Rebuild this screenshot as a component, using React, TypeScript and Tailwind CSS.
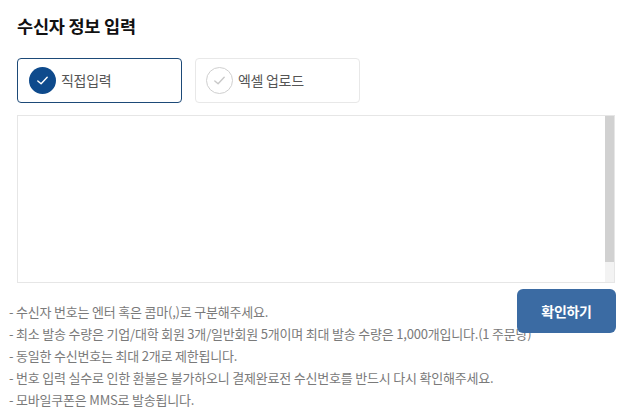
import React from "react";

function Check({ color, size = 14 }: { color: string; size?: number }) {
  return (
    <svg width={size} height={size} viewBox="0 0 16 16" fill="none">
      <path d="M3 8.5 L6.5 11.5 L13 4.5" stroke={color} strokeWidth="1.5" strokeLinecap="round" strokeLinejoin="round" />
    </svg>
  );
}

export default function App() {
  const notes = [
    "- 수신자 번호는 엔터 혹은 콤마(,)로 구분해주세요.",
    "- 최소 발송 수량은 기업/대학 회원 3개/일반회원 5개이며 최대 발송 수량은 1,000개입니다.(1 주문당)",
    "- 동일한 수신번호는 최대 2개로 제한됩니다.",
    "- 번호 입력 실수로 인한 환불은 불가하오니 결제완료전 수신번호를 반드시 다시 확인해주세요.",
    "- 모바일쿠폰은 MMS로 발송됩니다.",
  ];
  return (
    <div
      className="relative w-[625px] h-[411px] bg-white overflow-hidden"
      style={{ fontFamily: '"Noto Sans CJK KR", "Noto Sans", sans-serif' }}
    >
      <div className="pl-[17px] pr-[10px] pt-[13px]">
        <h1 className="text-[17.5px] font-bold text-[#111] leading-[26px] tracking-[-0.2px]">수신자 정보 입력</h1>
        <div className="flex gap-[13px] mt-[19px]">
          <div className="w-[165px] h-[45px] border border-[#1d4a78] rounded-[4px] flex items-center pl-[11px] gap-[5px]">
            <div className="w-[27px] h-[27px] rounded-full bg-[#0e4a8c] flex items-center justify-center">
              <Check color="#ffffff" size={15} />
            </div>
            <span className="text-[14px] text-[#555] tracking-[-0.3px]">직접입력</span>
          </div>
          <div className="w-[165px] h-[45px] border border-[#e8e8e8] rounded-[4px] flex items-center pl-[10px] gap-[5px]">
            <div className="w-[27px] h-[27px] rounded-full border border-[#cfcfcf] flex items-center justify-center">
              <Check color="#c8c8c8" size={15} />
            </div>
            <span className="text-[14px] text-[#555] tracking-[-0.3px]">엑셀 업로드</span>
          </div>
        </div>
        <div className="mt-[12px] w-[598px] h-[168px] border border-[#e6e6e6] flex justify-end">
          <div className="w-[9px] h-full flex flex-col">
            <div className="h-[146px] bg-[#d1d1d1]" />
            <div className="flex-1 bg-[#f3f3f3]" />
          </div>
        </div>
      </div>
      <div className="pl-[9px] mt-[18px] flex flex-col text-[13px] text-[#7a7a7a] leading-[22px] tracking-[-0.2px]">
        {notes.map((n) => (
          <div key={n}>{n}</div>
        ))}
      </div>
      <button className="absolute left-[517px] top-[289px] w-[99px] h-[44px] rounded-[6px] bg-[#3b6ba3] text-white text-[14px] font-bold tracking-[-0.3px]">
        확인하기
      </button>
    </div>
  );
}
